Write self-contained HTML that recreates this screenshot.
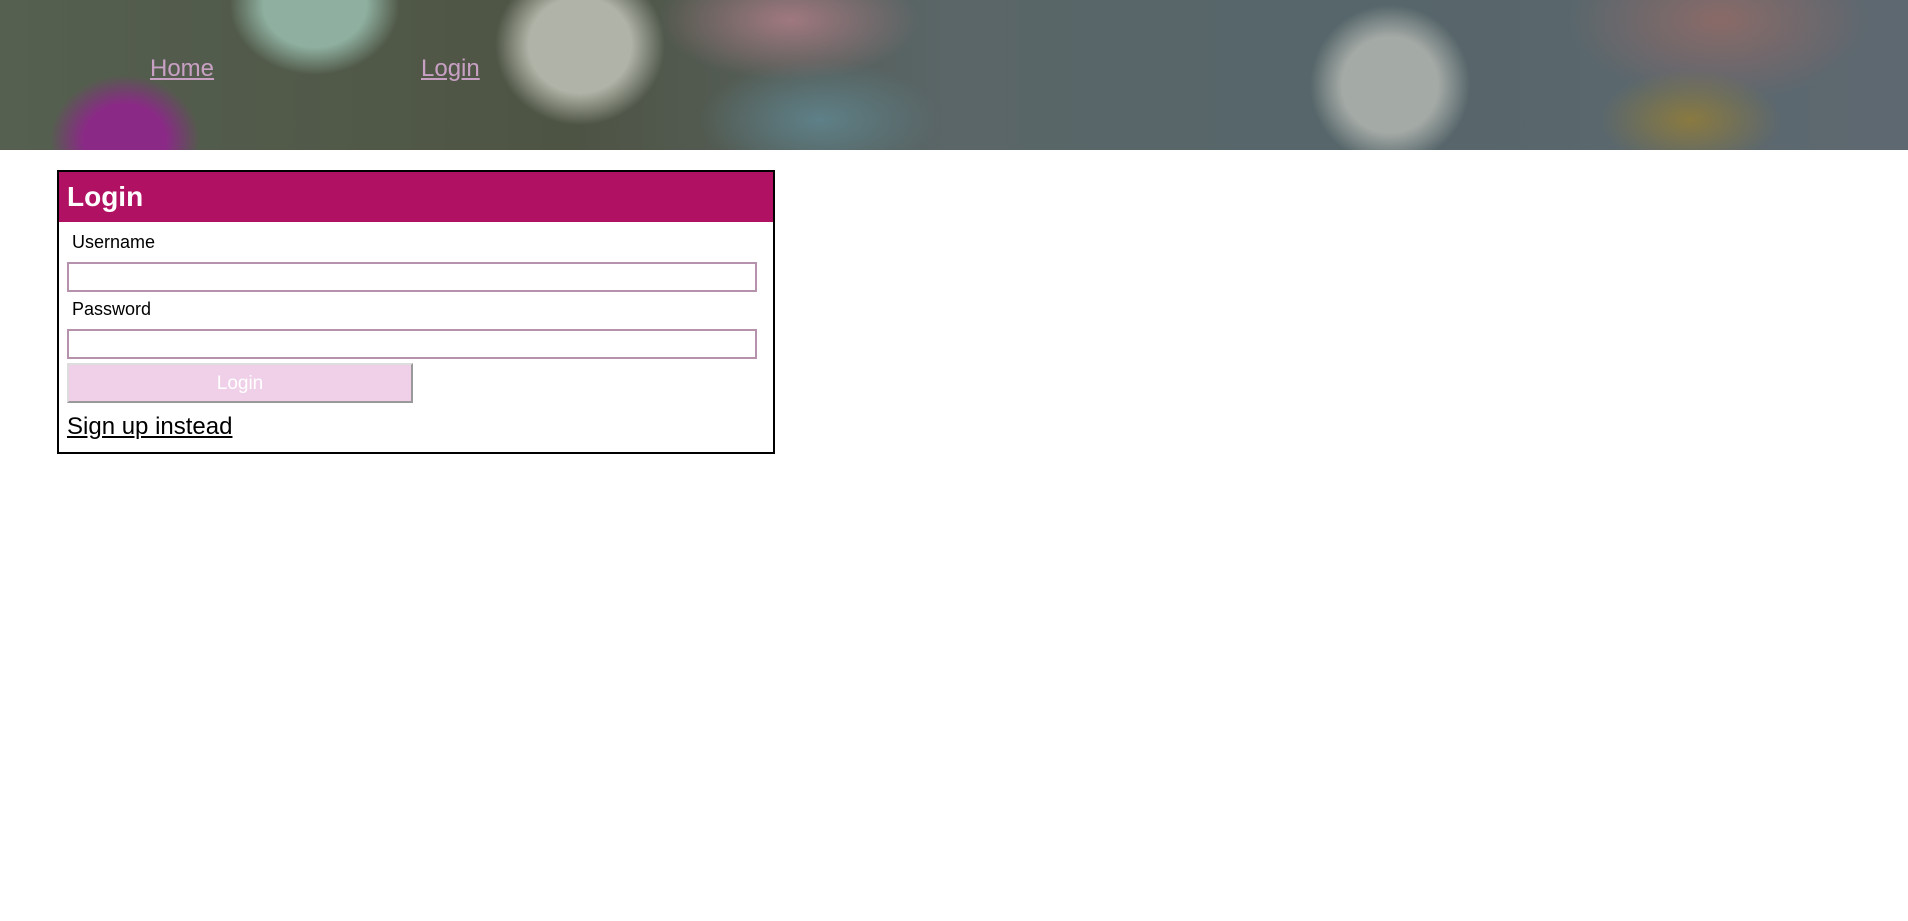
<!DOCTYPE html>
<html><head><meta charset="utf-8"><style>
html,body{margin:0;padding:0;background:#fff;font-family:"Liberation Sans",Arial,sans-serif;width:1908px;height:921px;overflow:hidden;position:relative}
#hdr{position:absolute;left:0;top:0;width:1908px;height:150px;overflow:hidden;
background:
radial-gradient(ellipse 75px 65px at 125px 140px,#8a2a86 0%,#8a2a86 55%,rgba(138,42,134,0) 100%),
radial-gradient(ellipse 85px 70px at 315px 5px,#8fb0a0 0%,#8fb0a0 60%,rgba(143,176,160,0) 100%),
radial-gradient(ellipse 85px 80px at 580px 45px,#b0b4a8 0%,#b0b4a8 60%,rgba(176,180,168,0) 100%),
radial-gradient(ellipse 80px 80px at 1390px 85px,#a4aaa6 0%,#a4aaa6 60%,rgba(164,170,166,0) 100%),
radial-gradient(ellipse 130px 60px at 790px 20px,#a07880 0%,rgba(160,120,128,0) 100%),
radial-gradient(ellipse 90px 50px at 1690px 120px,#8a7a40 0%,rgba(138,122,64,0) 100%),
radial-gradient(ellipse 150px 80px at 1720px 20px,#8a6a68 0%,rgba(138,106,104,0) 100%),
radial-gradient(ellipse 120px 60px at 820px 120px,#5e8088 0%,rgba(94,128,136,0) 100%),
linear-gradient(90deg,#556050 0%,#4e5444 30%,#5a6668 50%,#56666a 70%,#5e6870 100%);}
#hdr a{position:absolute;top:55px;font-size:24px;color:#c8a0c4;text-decoration:underline}
#box{position:absolute;left:57px;top:170px;width:714px;height:280px;border:2px solid #000}
#title{height:50px;background:#b11163;color:#fff;font-weight:bold;font-size:28px;line-height:50px;padding-left:8px}
.lbl{position:absolute;left:13px;font-size:18px;color:#000}
.inp{position:absolute;left:8px;width:690px;border:2px solid #b792ad;background:#fff;box-sizing:border-box;height:30px}
#btn{position:absolute;left:8px;top:191px;width:346px;height:40px;background:#efd0e8;border-top:2px solid #ddd;border-left:2px solid #ddd;border-right:2px solid #999;border-bottom:2px solid #999;box-sizing:border-box;color:#fff;font-size:19px;text-align:center;line-height:38px}
#su{position:absolute;left:8px;top:241px;font-size:24px;color:#000;text-decoration:underline}
</style></head><body>
<div id="hdr"><a style="left:150px">Home</a><a style="left:421px">Login</a></div>
<div id="box">
<div id="title">Login</div>
<div class="lbl" style="top:60px">Username</div>
<div class="inp" style="top:90px"></div>
<div class="lbl" style="top:127px">Password</div>
<div class="inp" style="top:157px"></div>
<div id="btn">Login</div>
<div id="su">Sign up instead</div>
</div>
</body></html>
